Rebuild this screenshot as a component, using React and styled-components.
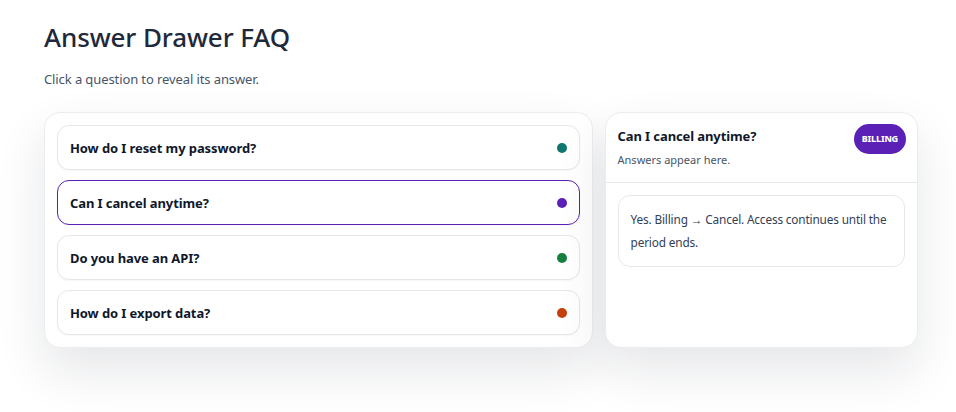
import React, { useState } from "react";
import styled, { createGlobalStyle } from "styled-components";

const faqs = [
  {
    q: "How do I reset my password?",
    a: "Go to Settings → Security and choose Reset password. We'll email you a link.",
    tag: "Account",
    color: "#0f766e",
  },
  {
    q: "Can I cancel anytime?",
    a: "Yes. Billing → Cancel. Access continues until the period ends.",
    tag: "Billing",
    color: "#5b21b6",
  },
  {
    q: "Do you have an API?",
    a: "Yes. Generate a key under Settings → Developers.",
    tag: "Developers",
    color: "#15803d",
  },
  {
    q: "How do I export data?",
    a: "Open Data → Export and pick CSV or JSON.",
    tag: "Data",
    color: "#c2410c",
  },
];

const App = () => {
  const [active, setActive] = useState(1);
  const item = faqs[active];

  return (
    <Page>
      <Global />
      <Title>Answer Drawer FAQ</Title>
      <Lead>Click a question to reveal its answer.</Lead>
      <Layout>
        <ListPanel>
          {faqs.map((f, i) => (
            <Question
              key={f.q}
              $active={i === active}
              $color={f.color}
              onClick={() => setActive(i)}
            >
              <span>{f.q}</span>
              <Dot $color={f.color} />
            </Question>
          ))}
        </ListPanel>
        <Drawer>
          <DrawerHead>
            <div>
              <DrawerTitle>{item.q}</DrawerTitle>
              <DrawerSub>Answers appear here.</DrawerSub>
            </div>
            <Badge $color={item.color}>{item.tag}</Badge>
          </DrawerHead>
          <DrawerBody>
            <Answer>{item.a}</Answer>
          </DrawerBody>
        </Drawer>
      </Layout>
    </Page>
  );
};

export default App;

const Global = createGlobalStyle`
  body {
    margin: 0;
    background: #ffffff;
    font-family: "Noto Sans", "Open Sans", sans-serif;
    color: #0f172a;
  }
`

const Page = styled.div`
  box-sizing: border-box;
  min-height: 412px;
  max-width: 918px;
  padding: 17px 0 64px 44px;
`

const Title = styled.h1`
  margin: 0;
  font-size: 26px;
  font-weight: 500;
  line-height: 40px;
  letter-spacing: -0.1px;
  color: #1e293b;
`

const Lead = styled.p`
  margin: 12px 0 0;
  font-size: 13px;
  line-height: 20px;
  letter-spacing: -0.1px;
  color: #475569;
`

const Layout = styled.div`
  display: grid;
  grid-template-columns: 1.75fr 1fr;
  gap: 12px;
  margin-top: 23px;
`

const ListPanel = styled.div`
  display: flex;
  flex-direction: column;
  gap: 10px;
  padding: 12px;
  background: #fff;
  border: 1px solid #ececf0;
  border-radius: 16px;
  box-shadow: 0 22px 50px rgba(15, 23, 42, 0.11);
`

const Question = styled.button`
  display: flex;
  align-items: center;
  justify-content: space-between;
  height: 45px;
  padding: 0 12px 0 12px;
  background: #fff;
  border: 1px solid ${(p) => (p.$active ? p.$color : "#e5e7eb")};
  border-radius: 12px;
  font-family: inherit;
  font-size: 13px;
  font-weight: 700;
  letter-spacing: -0.1px;
  color: #0f172a;
  text-align: left;
  cursor: pointer;
  box-shadow: 0 1px 2px rgba(15, 23, 42, 0.04);
`

const Dot = styled.i`
  width: 10px;
  height: 10px;
  border-radius: 50%;
  background: ${(p) => p.$color};
`

const Drawer = styled.div`
  background: #fff;
  border: 1px solid #ececf0;
  border-radius: 16px;
  box-shadow: 0 22px 50px rgba(15, 23, 42, 0.11);
  overflow: hidden;
`

const DrawerHead = styled.div`
  display: flex;
  justify-content: space-between;
  align-items: flex-start;
  padding: 12px 11px 13px 12px;
  border-bottom: 1px solid #e5e7eb;
`

const DrawerTitle = styled.div`
  font-size: 13px;
  font-weight: 700;
  line-height: 22px;
  letter-spacing: -0.1px;
  color: #0f172a;
`

const DrawerSub = styled.div`
  margin-top: 4px;
  font-size: 11px;
  line-height: 18px;
  color: #475569;
`

const Badge = styled.span`
  margin-top: -1px;
  padding: 9px 8px;
  border-radius: 999px;
  background: ${(p) => p.$color};
  color: #fff;
  font-size: 9px;
  font-weight: 800;
  line-height: 12px;
  letter-spacing: -0.2px;
  text-transform: uppercase;
`

const DrawerBody = styled.div`
  padding: 12px;
`

const Answer = styled.div`
  padding: 12px;
  border: 1px solid #e5e7eb;
  border-radius: 12px;
  font-size: 11.8px;
  line-height: 23px;
  letter-spacing: -0.15px;
  color: #334155;
`
